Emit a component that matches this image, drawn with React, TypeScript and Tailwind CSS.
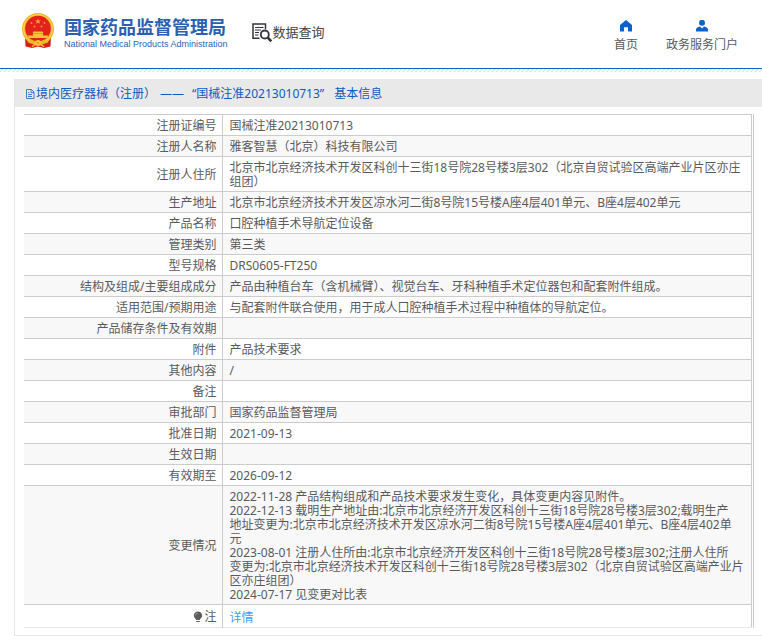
import type { ReactNode } from 'react';

interface Row {
  label: ReactNode;
  value?: ReactNode;
}

const ROWS: Row[] = [
  { label: '注册证编号', value: '国械注准20213010713' },
  { label: '注册人名称', value: '雅客智慧（北京）科技有限公司' },
  {
    label: '注册人住所',
    value: '北京市北京经济技术开发区科创十三街18号院28号楼3层302（北京自贸试验区高端产业片区亦庄组团）',
  },
  { label: '生产地址', value: '北京市北京经济技术开发区凉水河二街8号院15号楼A座4层401单元、B座4层402单元' },
  { label: '产品名称', value: '口腔种植手术导航定位设备' },
  { label: '管理类别', value: '第三类' },
  { label: '型号规格', value: 'DRS0605-FT250' },
  {
    label: '结构及组成/主要组成成分',
    value: '产品由种植台车（含机械臂）、视觉台车、牙科种植手术定位器包和配套附件组成。',
  },
  { label: '适用范围/预期用途', value: '与配套附件联合使用，用于成人口腔种植手术过程中种植体的导航定位。' },
  { label: '产品储存条件及有效期' },
  { label: '附件', value: '产品技术要求' },
  { label: '其他内容', value: '/' },
  { label: '备注' },
  { label: '审批部门', value: '国家药品监督管理局' },
  { label: '批准日期', value: '2021-09-13' },
  { label: '生效日期' },
  { label: '有效期至', value: '2026-09-12' },
  {
    label: '变更情况',
    value: (
      <>
        2022-11-28 产品结构组成和产品技术要求发生变化，具体变更内容见附件。
        <br />
        2022-12-13 载明生产地址由:北京市北京经济开发区科创十三街18号院28号楼3层302;载明生产
        <br />
        地址变更为:北京市北京经济技术开发区凉水河二街8号院15号楼A座4层401单元、B座4层402单
        <br />
        元
        <br />
        2023-08-01 注册人住所由:北京市北京经济开发区科创十三街18号院28号楼3层302;注册人住所
        <br />
        变更为:北京市北京经济技术开发区科创十三街18号院28号楼3层302（北京自贸试验区高端产业片
        <br />
        区亦庄组团）
        <br />
        2024-07-17 见变更对比表
      </>
    ),
  },
];

function Emblem() {
  return (
    <svg width="34" height="36" viewBox="0 0 34 36" aria-hidden="true">
      <path d="M4 23 L4.500 33.500 L11 35 L17 33.500 L23 35 L29.500 33.500 L30 23Z" fill="#d6201b" />
      <circle cx="17" cy="16" r="16" fill="#f0b429" />
      <circle cx="17" cy="16" r="14.500" fill="none" stroke="#fbd75a" strokeWidth="1" />
      <circle cx="17" cy="15.500" r="12.800" fill="#e3221c" />
      <path d="M17 5.500l.8 2h2.100l-1.700 1.300.7 2.100-1.900-1.300-1.900 1.300.7-2.100-1.700-1.300h2.100z" fill="#f8a83c" />
      <g fill="#f0983c">
        <circle cx="10.500" cy="10" r="0.900" />
        <circle cx="23.500" cy="10" r="0.900" />
        <circle cx="13.500" cy="13.500" r="0.900" />
        <circle cx="20.500" cy="13.500" r="0.900" />
      </g>
      <path d="M12.500 18.500h9l1 1.800h-11zM12 20.500h10v2H12zM6.500 22.500h21l-1.500 2.500h-18z" fill="#f8c13c" />
      <path d="M6 26.500c6 3 16 3 22 0l-1 3c-5 2-15 2-20 0z" fill="#f0b429" />
      <circle cx="17" cy="30" r="3" fill="#f5c23a" />
      <circle cx="17" cy="30" r="1.100" fill="#e39c22" />
      <path d="M11 34q2-3 4-2M23 34q-2-3-4-2" fill="none" stroke="#f5c23a" strokeWidth="1.300" />
    </svg>
  );
}

function SearchDocIcon() {
  return (
    <svg width="21" height="20" viewBox="0 0 21 20" fill="none" stroke="#35343f" aria-hidden="true">
      <path d="M7.500 15.300H1V1h12.500v5" strokeWidth="1.500" />
      <path d="M3 4.500h8.500M3 7h6M3 9.500h4M3 12h3.500" strokeWidth="1.100" />
      <circle cx="12.800" cy="11.500" r="4" strokeWidth="1.800" />
      <path d="M15.600 14.300l3.700 4" strokeWidth="2.600" />
    </svg>
  );
}

function HomeIcon() {
  return (
    <svg width="12" height="12" viewBox="0 0 12 12" fill="#0a62c8" aria-hidden="true">
      <path d="M6 0L0 5V11.500H4V7.200h4v4.300h4V5z" />
    </svg>
  );
}

function UserIcon() {
  return (
    <svg width="12" height="12" viewBox="0 0 12 12" fill="#0a62c8" aria-hidden="true">
      <circle cx="6" cy="2.800" r="3" />
      <path d="M0 11.500V9.500C0 8 1.500 7 4 6.500l2 2 2-2c2.500.5 4 1.500 4 3v2z" />
    </svg>
  );
}

function FileIcon() {
  return (
    <svg width="10" height="12" viewBox="0 0 10 12" fill="none" stroke="#2a6fca" strokeWidth="0.900" aria-hidden="true">
      <path d="M1.500 1.500h5l2.500 2.500v6.500H1.500zM6 1.500V4.500h3M3 6.500h4M3 8.500h4M3 4.500h1.500" />
    </svg>
  );
}

function BulbIcon() {
  return (
    <svg width="10" height="12" viewBox="0 0 10 12" aria-hidden="true">
      <path d="M5 0.500a4.200 4.200 0 0 1 4.200 4.200C9.200 6.800 7 7.500 6.800 9H3.200C3 7.500.8 6.800.8 4.700A4.200 4.200 0 0 1 5 .5z" fill="#5c5c5c" />
      <path d="M3.200 10.500h3.600" stroke="#5c5c5c" />
      <path d="M2.500 4.500C2.500 3 3.500 2.200 4.800 2.200" fill="none" stroke="#bbb" strokeWidth=".7" />
    </svg>
  );
}

export default function App() {
  return (
    <div className="bg-white font-['Noto_Sans','Noto_Sans_CJK_SC',sans-serif] text-xs leading-[14px] text-[#5a5a5c]">
      <header>
        <div className="box-content flex h-[68px] items-start justify-between border-b border-[#0a62c8] pl-[21px] pr-6">
          <div className="flex">
            <a href="#" className="mt-[13px] flex gap-[9px]">
              <Emblem />
              <div className="whitespace-nowrap text-[#2c5fb3]">
                <div className="mt-1 text-lg leading-[21px] font-bold">国家药品监督管理局</div>
                <div className="font-['Liberation_Sans',sans-serif] text-[9px] leading-3">
                  National Medical Products Administration
                </div>
              </div>
            </a>
            <a href="#" className="mt-[23px] ml-6 flex h-5 text-[13px] leading-[18px] whitespace-nowrap text-[#444]">
              <SearchDocIcon />
              数据查询
            </a>
          </div>
          <nav className="mt-5 flex gap-7 whitespace-nowrap">
            <a href="#" className="flex flex-col items-center gap-1.5">
              <HomeIcon />
              首页
            </a>
            <a href="#" className="flex flex-col items-center gap-1.5">
              <UserIcon />
              政务服务门户
            </a>
          </nav>
        </div>
        <div className="h-[3px] bg-[repeating-linear-gradient(135deg,#fff_0px,#fff_1px,#ddd_2px,#fff_3px)]" />
      </header>

      <main className="mt-[7px] ml-[14px] border-b border-l border-[#e6e6ea] pb-[7px]">
        <h1 className="flex h-7 items-center bg-[#e9e9e9] pt-0.5 pl-[10px] text-[#0a5cbd]">
          <FileIcon />
          <span className="ml-px">境内医疗器械（注册）</span>
          <span className="ml-1">——</span>
          <span className="ml-2">“国械注准20213010713”</span>
          <span className="ml-2.5">基本信息</span>
        </h1>

        <div className="mt-[7px] mr-2 ml-[9px] border-r border-[#c8c8d0] pr-px">
          <table className="w-full table-fixed border-collapse border-t border-r border-[#ccc]">
            <colgroup>
              <col className="w-[198px]" />
              <col />
            </colgroup>
            <tbody>
              {ROWS.map((row, i) => (
                <tr key={i} className="border-b border-[#ccc] even:bg-[#f8f8f8]">
                  <th scope="row" className="h-[21px] border-r border-[#ccc] pt-1 pr-[5px] pb-0.5 text-right font-normal">
                    {row.label}
                  </th>
                  <td className="pt-1 pr-1 pb-0.5 pl-[7px]">{row.value}</td>
                </tr>
              ))}
              <tr className="border-b border-[#e6e6ea]">
                <th scope="row" className="h-[23px] border-r border-[#ccc] pt-0.5 pr-[5px] font-normal">
                  <span className="flex items-center justify-end gap-px">
                    <BulbIcon />注
                  </span>
                </th>
                <td className="pt-1 pl-[7px]">
                  <a href="#" className="text-[#409eff]">
                    详情
                  </a>
                </td>
              </tr>
            </tbody>
          </table>
        </div>
      </main>
    </div>
  );
}
